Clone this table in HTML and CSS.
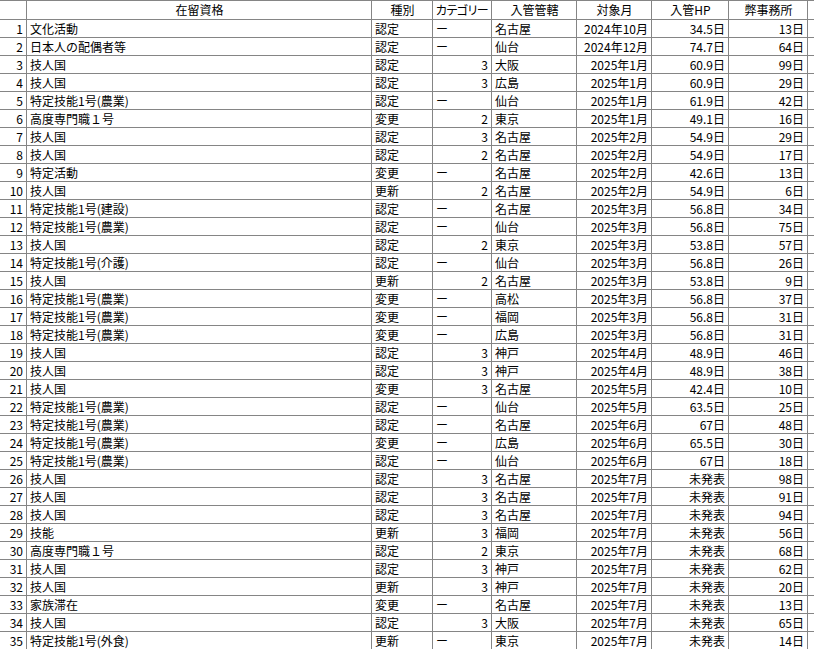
FILE: index.html
```html
<!DOCTYPE html>
<html lang="ja">
<head>
<meta charset="utf-8">
<title>在留資格</title>
<link rel="stylesheet" href="styles.css">
</head>
<body>
<div class="sheet">
<div class="c h"></div><div class="c h ctr">在留資格</div><div class="c h ctr">種別</div><div class="c h ctr kana">カテゴリー</div><div class="c h ctr">入管管轄</div><div class="c h ctr">対象月</div><div class="c h ctr">入管HP</div><div class="c h ctr">弊事務所</div><div class="c h x"></div>
<div class="c r">1</div><div class="c">文化活動</div><div class="c">認定</div><div class="c">ー</div><div class="c">名古屋</div><div class="c r">2024年10月</div><div class="c r">34.5日</div><div class="c r">13日</div><div class="c x"></div>
<div class="c r">2</div><div class="c">日本人の配偶者等</div><div class="c">認定</div><div class="c">ー</div><div class="c">仙台</div><div class="c r">2024年12月</div><div class="c r">74.7日</div><div class="c r">64日</div><div class="c x"></div>
<div class="c r">3</div><div class="c">技人国</div><div class="c">認定</div><div class="c r">3</div><div class="c">大阪</div><div class="c r">2025年1月</div><div class="c r">60.9日</div><div class="c r">99日</div><div class="c x"></div>
<div class="c r">4</div><div class="c">技人国</div><div class="c">認定</div><div class="c r">3</div><div class="c">広島</div><div class="c r">2025年1月</div><div class="c r">60.9日</div><div class="c r">29日</div><div class="c x"></div>
<div class="c r">5</div><div class="c">特定技能1号(農業)</div><div class="c">認定</div><div class="c">ー</div><div class="c">仙台</div><div class="c r">2025年1月</div><div class="c r">61.9日</div><div class="c r">42日</div><div class="c x"></div>
<div class="c r">6</div><div class="c">高度専門職１号</div><div class="c">変更</div><div class="c r">2</div><div class="c">東京</div><div class="c r">2025年1月</div><div class="c r">49.1日</div><div class="c r">16日</div><div class="c x"></div>
<div class="c r">7</div><div class="c">技人国</div><div class="c">認定</div><div class="c r">3</div><div class="c">名古屋</div><div class="c r">2025年2月</div><div class="c r">54.9日</div><div class="c r">29日</div><div class="c x"></div>
<div class="c r">8</div><div class="c">技人国</div><div class="c">認定</div><div class="c r">2</div><div class="c">名古屋</div><div class="c r">2025年2月</div><div class="c r">54.9日</div><div class="c r">17日</div><div class="c x"></div>
<div class="c r">9</div><div class="c">特定活動</div><div class="c">変更</div><div class="c">ー</div><div class="c">名古屋</div><div class="c r">2025年2月</div><div class="c r">42.6日</div><div class="c r">13日</div><div class="c x"></div>
<div class="c r">10</div><div class="c">技人国</div><div class="c">更新</div><div class="c r">2</div><div class="c">名古屋</div><div class="c r">2025年2月</div><div class="c r">54.9日</div><div class="c r">6日</div><div class="c x"></div>
<div class="c r">11</div><div class="c">特定技能1号(建設)</div><div class="c">認定</div><div class="c">ー</div><div class="c">名古屋</div><div class="c r">2025年3月</div><div class="c r">56.8日</div><div class="c r">34日</div><div class="c x"></div>
<div class="c r">12</div><div class="c">特定技能1号(農業)</div><div class="c">認定</div><div class="c">ー</div><div class="c">仙台</div><div class="c r">2025年3月</div><div class="c r">56.8日</div><div class="c r">75日</div><div class="c x"></div>
<div class="c r">13</div><div class="c">技人国</div><div class="c">認定</div><div class="c r">2</div><div class="c">東京</div><div class="c r">2025年3月</div><div class="c r">53.8日</div><div class="c r">57日</div><div class="c x"></div>
<div class="c r">14</div><div class="c">特定技能1号(介護)</div><div class="c">認定</div><div class="c">ー</div><div class="c">仙台</div><div class="c r">2025年3月</div><div class="c r">56.8日</div><div class="c r">26日</div><div class="c x"></div>
<div class="c r">15</div><div class="c">技人国</div><div class="c">更新</div><div class="c r">2</div><div class="c">名古屋</div><div class="c r">2025年3月</div><div class="c r">53.8日</div><div class="c r">9日</div><div class="c x"></div>
<div class="c r">16</div><div class="c">特定技能1号(農業)</div><div class="c">変更</div><div class="c">ー</div><div class="c">高松</div><div class="c r">2025年3月</div><div class="c r">56.8日</div><div class="c r">37日</div><div class="c x"></div>
<div class="c r">17</div><div class="c">特定技能1号(農業)</div><div class="c">変更</div><div class="c">ー</div><div class="c">福岡</div><div class="c r">2025年3月</div><div class="c r">56.8日</div><div class="c r">31日</div><div class="c x"></div>
<div class="c r">18</div><div class="c">特定技能1号(農業)</div><div class="c">変更</div><div class="c">ー</div><div class="c">広島</div><div class="c r">2025年3月</div><div class="c r">56.8日</div><div class="c r">31日</div><div class="c x"></div>
<div class="c r">19</div><div class="c">技人国</div><div class="c">認定</div><div class="c r">3</div><div class="c">神戸</div><div class="c r">2025年4月</div><div class="c r">48.9日</div><div class="c r">46日</div><div class="c x"></div>
<div class="c r">20</div><div class="c">技人国</div><div class="c">認定</div><div class="c r">3</div><div class="c">神戸</div><div class="c r">2025年4月</div><div class="c r">48.9日</div><div class="c r">38日</div><div class="c x"></div>
<div class="c r">21</div><div class="c">技人国</div><div class="c">変更</div><div class="c r">3</div><div class="c">名古屋</div><div class="c r">2025年5月</div><div class="c r">42.4日</div><div class="c r">10日</div><div class="c x"></div>
<div class="c r">22</div><div class="c">特定技能1号(農業)</div><div class="c">認定</div><div class="c">ー</div><div class="c">仙台</div><div class="c r">2025年5月</div><div class="c r">63.5日</div><div class="c r">25日</div><div class="c x"></div>
<div class="c r">23</div><div class="c">特定技能1号(農業)</div><div class="c">認定</div><div class="c">ー</div><div class="c">名古屋</div><div class="c r">2025年6月</div><div class="c r">67日</div><div class="c r">48日</div><div class="c x"></div>
<div class="c r">24</div><div class="c">特定技能1号(農業)</div><div class="c">変更</div><div class="c">ー</div><div class="c">広島</div><div class="c r">2025年6月</div><div class="c r">65.5日</div><div class="c r">30日</div><div class="c x"></div>
<div class="c r">25</div><div class="c">特定技能1号(農業)</div><div class="c">認定</div><div class="c">ー</div><div class="c">仙台</div><div class="c r">2025年6月</div><div class="c r">67日</div><div class="c r">18日</div><div class="c x"></div>
<div class="c r">26</div><div class="c">技人国</div><div class="c">認定</div><div class="c r">3</div><div class="c">名古屋</div><div class="c r">2025年7月</div><div class="c r">未発表</div><div class="c r">98日</div><div class="c x"></div>
<div class="c r">27</div><div class="c">技人国</div><div class="c">認定</div><div class="c r">3</div><div class="c">名古屋</div><div class="c r">2025年7月</div><div class="c r">未発表</div><div class="c r">91日</div><div class="c x"></div>
<div class="c r">28</div><div class="c">技人国</div><div class="c">認定</div><div class="c r">3</div><div class="c">名古屋</div><div class="c r">2025年7月</div><div class="c r">未発表</div><div class="c r">94日</div><div class="c x"></div>
<div class="c r">29</div><div class="c">技能</div><div class="c">更新</div><div class="c r">3</div><div class="c">福岡</div><div class="c r">2025年7月</div><div class="c r">未発表</div><div class="c r">56日</div><div class="c x"></div>
<div class="c r">30</div><div class="c">高度専門職１号</div><div class="c">認定</div><div class="c r">2</div><div class="c">東京</div><div class="c r">2025年7月</div><div class="c r">未発表</div><div class="c r">68日</div><div class="c x"></div>
<div class="c r">31</div><div class="c">技人国</div><div class="c">認定</div><div class="c r">3</div><div class="c">神戸</div><div class="c r">2025年7月</div><div class="c r">未発表</div><div class="c r">62日</div><div class="c x"></div>
<div class="c r">32</div><div class="c">技人国</div><div class="c">更新</div><div class="c r">3</div><div class="c">神戸</div><div class="c r">2025年7月</div><div class="c r">未発表</div><div class="c r">20日</div><div class="c x"></div>
<div class="c r">33</div><div class="c">家族滞在</div><div class="c">変更</div><div class="c">ー</div><div class="c">名古屋</div><div class="c r">2025年7月</div><div class="c r">未発表</div><div class="c r">13日</div><div class="c x"></div>
<div class="c r">34</div><div class="c">技人国</div><div class="c">認定</div><div class="c r">3</div><div class="c">大阪</div><div class="c r">2025年7月</div><div class="c r">未発表</div><div class="c r">65日</div><div class="c x"></div>
<div class="c r">35</div><div class="c">特定技能1号(外食)</div><div class="c">更新</div><div class="c">ー</div><div class="c">東京</div><div class="c r">2025年7月</div><div class="c r">未発表</div><div class="c r">14日</div><div class="c x"></div>
</div>
</body>
</html>
```
FILE: styles.css
```css
html, body {
  margin: 0;
  padding: 0;
  background: #ffffff;
}
body {
  width: 814px;
  height: 649px;
  overflow: hidden;
  font-family: "Noto Sans CJK JP", "Noto Sans", sans-serif;
  font-size: 12px;
  color: #000000;
}
.sheet {
  display: grid;
  grid-template-columns: 27px 345px 61px 59px 85px 75px 77px 79px 1fr;
  grid-template-rows: 20px;
  grid-auto-rows: 18px;
}
.c {
  box-sizing: border-box;
  border-right: 1px solid #858585;
  border-bottom: 1px solid #858585;
  padding: 0 2px 0 3px;
  line-height: 17px;
  white-space: nowrap;
  overflow: hidden;
}
.h {
  border-top: 1px solid #858585;
  line-height: 18px;
}
.ctr {
  text-align: center;
}
.kana {
  font-feature-settings: "palt" 1;
  letter-spacing: -0.5px;
  padding: 0;
}
.r {
  text-align: right;
  padding: 0 3px 0 2px;
}
.x {
  border-right: none;
}
```
